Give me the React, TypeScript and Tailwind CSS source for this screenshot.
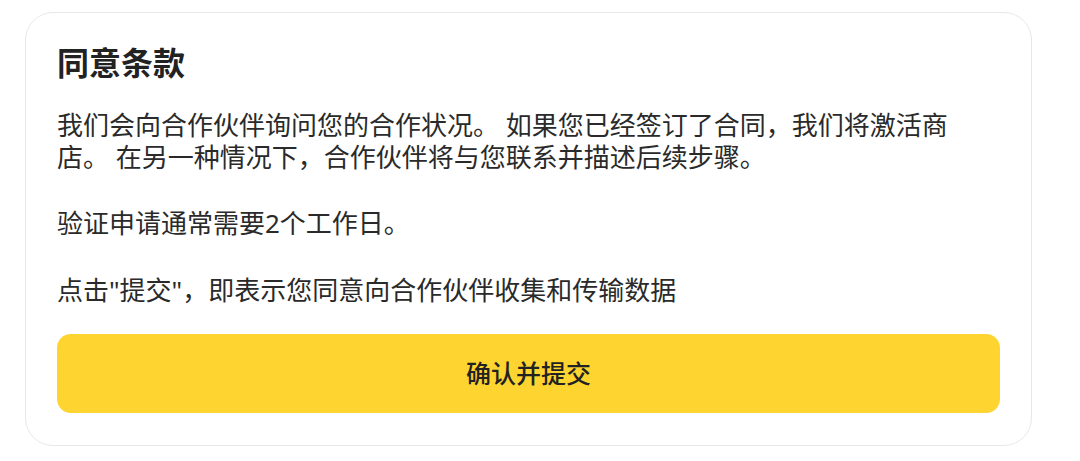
export default function App() {
    return (
        <div className="min-h-screen bg-white pl-[25px] pr-[48px] pt-[12px]" style={{ fontFamily: '"Noto Sans", "Noto Sans CJK SC", sans-serif' }}>
            <div className="w-[1007px] rounded-[28px] border border-[#e8e8e8] bg-white px-[31px] pt-[30px] pb-[32px]">
                {/* Title */}
                <h1 className="text-[32px] font-bold leading-[40px] text-[#222222]">同意条款</h1>

                {/* Body */}
                <div className="mt-[26px] w-[900px] text-[26px] leading-[32px] text-[#2a2a2a]">
                    <p>我们会向合作伙伴询问您的合作状况。 如果您已经签订了合同，我们将激活商店。 在另一种情况下，合作伙伴将与您联系并描述后续步骤。</p>
                    <p className="mt-[34px]">验证申请通常需要2个工作日。</p>
                    <p className="mt-[35px]">点击"提交"，即表示您同意向合作伙伴收集和传输数据</p>
                </div>

                {/* Submit */}
                <button className="mt-[28px] flex h-[79px] w-full items-center justify-center rounded-[14px] bg-[#fed430] text-[25px] font-medium text-[#222222]">
                    确认并提交
                </button>
            </div>
        </div>
    )
}
